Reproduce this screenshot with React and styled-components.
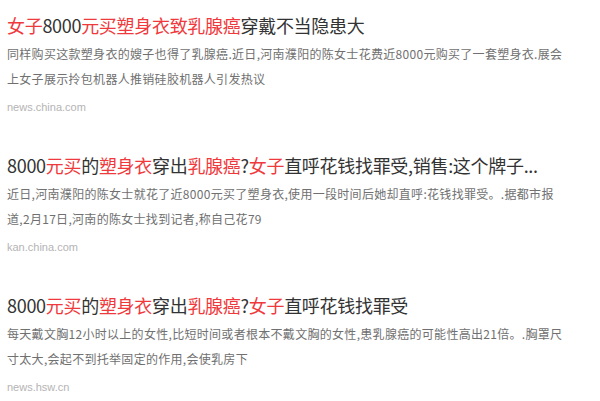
import React from "react";
import styled, { createGlobalStyle } from "styled-components";

const GlobalStyle = createGlobalStyle`
  html, body {
    margin: 0;
    padding: 0;
    background: #fff;
  }
`;

export const List = styled.div`
  display: flex;
  flex-direction: column;
  gap: 32.5px;
  padding: 9.5px 7px 0 7px;
  font-family: "Noto Sans CJK SC", "Noto Sans", sans-serif;
`;

export const Item = styled.div`
  display: flex;
  flex-direction: column;
`;

export const Title = styled.div`
  font-size: 18px;
  letter-spacing: -0.3px;
  line-height: 30px;
  color: #333;
  white-space: nowrap;
`;

export const Em = styled.span`
  color: ${(p) => (p.$hl ? "#f0393c" : "#333")};
`;

export const Desc = styled.div`
  margin-top: 1px;
  font-size: 12px;
  letter-spacing: 0.3px;
  line-height: 25px;
  color: #707070;
  width: 590px;
  white-space: nowrap;
`;

export const Source = styled.div`
  margin-top: 6.5px;
  font-family: "Liberation Sans", Arial, sans-serif;
  font-size: 11px;
  line-height: 20px;
  color: #b4b4b4;
`;

const items = [
  {
    title: [
      ["女子", true],
      ["8000", false],
      ["元买塑身衣致乳腺癌", true],
      ["穿戴不当隐患大", false],
    ],
    lines: [
      "同样购买这款塑身衣的嫂子也得了乳腺癌.近日,河南濮阳的陈女士花费近8000元购买了一套塑身衣.展会",
      "上女子展示拎包机器人推销硅胶机器人引发热议",
    ],
    source: "news.china.com",
  },
  {
    title: [
      ["8000", false],
      ["元买", true],
      ["的", false],
      ["塑身衣", true],
      ["穿出", false],
      ["乳腺癌", true],
      ["?", false],
      ["女子", true],
      ["直呼花钱找罪受,销售:这个牌子...", false],
    ],
    lines: [
      "近日,河南濮阳的陈女士就花了近8000元买了塑身衣,使用一段时间后她却直呼:花钱找罪受。.据都市报",
      "道,2月17日,河南的陈女士找到记者,称自己花79",
    ],
    source: "kan.china.com",
  },
  {
    title: [
      ["8000", false],
      ["元买", true],
      ["的", false],
      ["塑身衣", true],
      ["穿出", false],
      ["乳腺癌", true],
      ["?", false],
      ["女子", true],
      ["直呼花钱找罪受", false],
    ],
    lines: [
      "每天戴文胸12小时以上的女性,比短时间或者根本不戴文胸的女性,患乳腺癌的可能性高出21倍。.胸罩尺",
      "寸太大,会起不到托举固定的作用,会使乳房下",
    ],
    source: "news.hsw.cn",
  },
];

const App = () => (
  <>
    <GlobalStyle />
    <List>
      {items.map((item, i) => (
        <Item key={i}>
          <Title>
            {item.title.map(([text, hl], j) => (
              <Em key={j} $hl={hl}>
                {text}
              </Em>
            ))}
          </Title>
          <Desc>
            {item.lines.map((line, j) => (
              <div key={j}>{line}</div>
            ))}
          </Desc>
          <Source>{item.source}</Source>
        </Item>
      ))}
    </List>
  </>
);

export default App;
